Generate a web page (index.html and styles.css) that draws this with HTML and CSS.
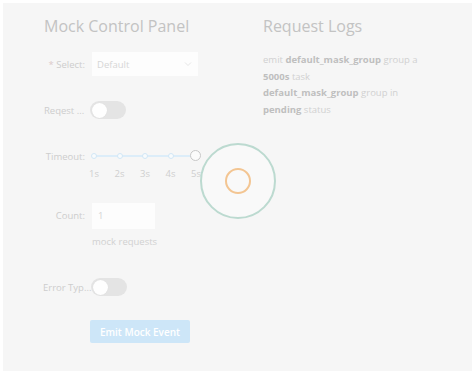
FILE: index.html
```html
<!DOCTYPE html>
<html>
<head>
<meta charset="utf-8">
<link rel="stylesheet" href="styles.css">
</head>
<body>
<div class="panel">
  <section class="col-left">
    <h2 class="title">Mock Control Panel</h2>
    <div class="form">
      <div class="item item-select">
        <label class="label"><span class="req">*</span> Select:</label>
        <div class="select">
          <span class="placeholder">Default</span>
          <svg class="arrow" width="8" height="6" viewBox="0 0 8 6"><path d="M1 1.5 L4 4.5 L7 1.5" fill="none" stroke="#e6e6e6" stroke-width="1"/></svg>
        </div>
      </div>
      <div class="item item-toggle1">
        <label class="label label-left">Reqest ...</label>
        <div class="switch"><span class="knob"></span></div>
      </div>
      <div class="item item-slider">
        <label class="label">Timeout:</label>
        <div class="slider-wrap">
          <div class="slider">
            <div class="track"></div>
            <span class="dot" style="left:0%"></span>
            <span class="dot" style="left:25%"></span>
            <span class="dot" style="left:50%"></span>
            <span class="dot" style="left:75%"></span>
            <span class="handle" style="left:100%"></span>
          </div>
          <div class="ticks">
            <span class="tick" style="left:0%">1s</span>
            <span class="tick" style="left:25%">2s</span>
            <span class="tick" style="left:50%">3s</span>
            <span class="tick" style="left:75%">4s</span>
            <span class="tick" style="left:100%">5s</span>
          </div>
        </div>
      </div>
      <div class="item item-count">
        <label class="label">Count:</label>
        <div class="count-col">
          <div class="input">1</div>
          <div class="help">mock requests</div>
        </div>
      </div>
      <div class="item item-toggle2">
        <label class="label label-left label-wide">Error Typ...</label>
        <div class="switch"><span class="knob"></span></div>
      </div>
      <div class="item item-button">
        <span class="label"></span>
        <button class="btn">Emit Mock Event</button>
      </div>
    </div>
  </section>
  <section class="col-right">
    <h2 class="title">Request Logs</h2>
    <div class="logs">
      <div class="log">emit <b>default_mask_group</b> group a <b>5000s</b> task</div>
      <div class="log"><b>default_mask_group</b> group in <b>pending</b> status</div>
    </div>
  </section>
  <div class="spinner">
    <svg width="80" height="80" viewBox="0 0 80 80">
      <circle cx="40" cy="40" r="37" fill="#f9f9f9" stroke="#bcdad0" stroke-width="2"/>
      <circle cx="40" cy="40" r="12" fill="none" stroke="#f3c592" stroke-width="2"/>
    </svg>
  </div>
</div>
</body>
</html>
```

FILE: styles.css
```css
html, body {
  margin: 0;
  padding: 0;
  background: #ffffff;
}
body {
  font-family: "Open Sans", "Liberation Sans", sans-serif;
  padding: 3px 2px 3px 3px;
  width: 474px;
  height: 374px;
  box-sizing: border-box;
}
.panel {
  position: relative;
  background: #f6f6f6;
  height: 368px;
  display: flex;
  padding: 12px 0 0 40px;
  box-sizing: border-box;
}
.col-left {
  width: 220px;
}
.col-right {
  width: 170px;
}
.title {
  margin: 0 0 0 1px;
  font-size: 16px;
  line-height: 22px;
  font-weight: 400;
  color: #c3c3c3;
}
.form {
  margin-top: 15px;
}
.item {
  display: flex;
  align-items: center;
  font-size: 9.5px;
  color: #cdcdcd;
}
.label {
  width: 47px;
  flex: none;
  text-align: right;
  padding-right: 5px;
  box-sizing: border-box;
  white-space: nowrap;
}
.label-left {
  text-align: left;
  padding-left: 1px;
  padding-right: 0;
}
.label-wide {
  width: 48px;
  padding-left: 0;
}
.req {
  color: #dccaca;
}
.item-select {
  height: 24px;
}
.select {
  width: 106px;
  height: 24px;
  background: #fdfdfd;
  margin-left: 2px;
  display: flex;
  align-items: center;
  justify-content: space-between;
  padding: 0 6px 0 5px;
  box-sizing: border-box;
}
.placeholder {
  color: #d6d6d6;
}
.item-toggle1 {
  margin-top: 22px;
  height: 24px;
}
.switch {
  width: 36px;
  height: 18px;
  border-radius: 9px;
  background: #e4e4e4;
  display: flex;
  align-items: center;
  padding: 0 2px;
  box-sizing: border-box;
}
.knob {
  width: 15px;
  height: 15px;
  border-radius: 50%;
  background: #fefefe;
  box-shadow: 0 0 1px rgba(0, 0, 0, 0.08);
}
.item-slider {
  margin-top: 24px;
  align-items: flex-start;
}
.item-slider .label {
  line-height: 22px;
}
.slider-wrap {
  width: 102px;
  margin-left: 4px;
}
.slider {
  position: relative;
  height: 20px;
}
.track {
  position: absolute;
  left: 0;
  right: 0;
  top: 9px;
  height: 2px;
  background: #dcedf9;
}
.dot {
  position: absolute;
  top: 7px;
  width: 6px;
  height: 6px;
  margin-left: -3px;
  border-radius: 50%;
  background: #f8fbfd;
  border: 1px solid #d2e7f6;
  box-sizing: border-box;
}
.handle {
  position: absolute;
  top: 4px;
  width: 11px;
  height: 11px;
  margin-left: -6px;
  border-radius: 50%;
  background: #fbfbfb;
  border: 1px solid #c8c8c8;
  box-sizing: border-box;
}
.ticks {
  position: relative;
  height: 14px;
  margin-top: 1px;
}
.tick {
  position: absolute;
  top: 0;
  transform: translateX(-50%);
  color: #cfcfcf;
  font-size: 9.5px;
  line-height: 14px;
}
.item-count {
  margin-top: 22px;
  align-items: flex-start;
}
.item-count .label {
  line-height: 26px;
}
.count-col {
  margin-left: 2px;
}
.input {
  width: 63px;
  height: 26px;
  background: #fdfdfd;
  line-height: 26px;
  padding-left: 6px;
  box-sizing: border-box;
  color: #d4d4d4;
}
.help {
  margin-top: 6px;
  line-height: 14px;
  color: #d1d1d1;
}
.item-toggle2 {
  margin-top: 26px;
  height: 24px;
}
.item-toggle2 .switch {
  margin-left: 0;
}
.item-button {
  margin-top: 21px;
}
.btn {
  margin-left: 0;
  width: 100px;
  height: 23px;
  border: none;
  border-radius: 2px;
  background: #cde6f8;
  color: #ffffff;
  font-family: "Open Sans", "Liberation Sans", sans-serif;
  font-size: 10px;
  font-weight: 600;
  padding: 0;
}
.col-right .title {
  margin-left: 0;
}
.logs {
  margin: 15px 0 0 0;
  font-size: 9.5px;
  line-height: 16.6px;
  color: #d1d1d1;
}
.log b {
  font-weight: 700;
  color: #bfbfbf;
}
.spinner {
  position: absolute;
  left: 195px;
  top: 138px;
  width: 80px;
  height: 80px;
}
```
